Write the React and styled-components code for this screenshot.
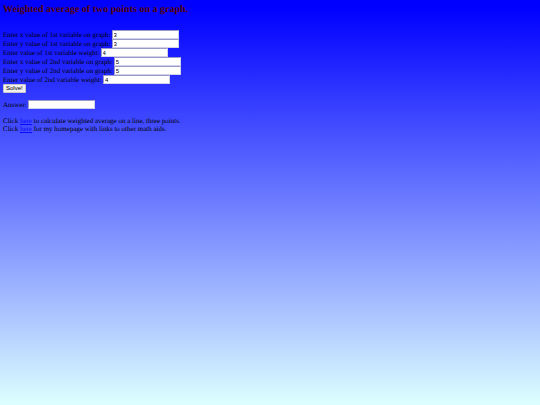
import React, { useState } from 'react';
import styled, { createGlobalStyle } from 'styled-components';

const GlobalStyle = createGlobalStyle`
    body {
        margin: 0;
    }
`;

const Page = styled.main`
    box-sizing: border-box;
    min-height: 100vh;
    padding: 4px 3px;
    font-family: 'Liberation Serif', 'Times New Roman', serif;
    font-size: 7px;
    line-height: 8px;
    text-rendering: geometricPrecision;
    color: #000;
    background: linear-gradient(to bottom, #0000ff 2%, #deffff 100%);
`;

const Title = styled.h1`
    margin: 0 0 14px;
    font-size: 10px;
    line-height: 12px;
    color: #580000;
`;

const Row = styled.div`
    display: flex;
    align-items: center;
    gap: 1px;
    height: 9px;
`;

const TextInput = styled.input`
    box-sizing: border-box;
    width: 67px;
    height: 9px;
    padding: 0 1px;
    border: 1px solid #9a9ac8;
    border-right-color: #d0d0e8;
    border-bottom-color: #d0d0e8;
    font-family: 'Liberation Sans', Arial, sans-serif;
    font-size: 6px;
    line-height: 7px;
    color: #000;
    background: #fff;
`;

const SolveButton = styled.button`
    display: block;
    box-sizing: border-box;
    height: 9px;
    padding: 0 2px;
    border: 1px solid #c8c8c8;
    border-radius: 1px;
    font-family: 'Liberation Sans', Arial, sans-serif;
    font-size: 6px;
    line-height: 7px;
    color: #000;
    background: #efefef;
`;

const Answer = styled(Row)`
    margin: 7px 0 8px;
`;

const Note = styled.p`
    margin: 0;
`;

const NoteLink = styled.a`
    color: #0a0aff;
    text-decoration: underline;
`;

const FIELDS = [
    { id: 'x1', label: 'Enter x value of 1st variable on graph:', value: '3' },
    { id: 'y1', label: 'Enter y value of 1st variable on graph:', value: '3' },
    { id: 'w1', label: 'Enter value of 1st variable weight:', value: '4' },
    { id: 'x2', label: 'Enter x value of 2nd variable on graph:', value: '5' },
    { id: 'y2', label: 'Enter y value of 2nd variable on graph:', value: '5' },
    { id: 'w2', label: 'Enter value of 2nd variable weight:', value: '4' },
];

const average = (a, weightA, b, weightB) => (a * weightA + b * weightB) / (weightA + weightB);

export default function App() {
    const [values, setValues] = useState(() =>
        Object.fromEntries(FIELDS.map(({ id, value }) => [id, value]))
    );
    const [answer, setAnswer] = useState('');

    const onChange = e => {
        setValues({ ...values, [e.target.id]: e.target.value });
    };

    const onSubmit = e => {
        e.preventDefault();
        const [x1, y1, w1, x2, y2, w2] = FIELDS.map(({ id }) => Number(values[id]));
        setAnswer(`(${average(x1, w1, x2, w2)}, ${average(y1, w1, y2, w2)})`);
    };

    return (
        <Page>
            <GlobalStyle />
            <Title>Weighted average of two points on a graph.</Title>
            <form onSubmit={onSubmit}>
                {FIELDS.map(({ id, label }) => (
                    <Row key={id}>
                        <label htmlFor={id}>{label}</label>
                        <TextInput id={id} type="text" value={values[id]} onChange={onChange} />
                    </Row>
                ))}
                <SolveButton type="submit">Solve!</SolveButton>
                <Answer>
                    <label htmlFor="answer">Answer:</label>
                    <TextInput id="answer" type="text" value={answer} readOnly />
                </Answer>
            </form>
            <Note>
                Click <NoteLink href="#three-points">here</NoteLink> to calculate weighted average on
                a line, three points.
            </Note>
            <Note>
                Click <NoteLink href="#home">here</NoteLink> for my homepage with links to other math
                aids.
            </Note>
        </Page>
    );
}
